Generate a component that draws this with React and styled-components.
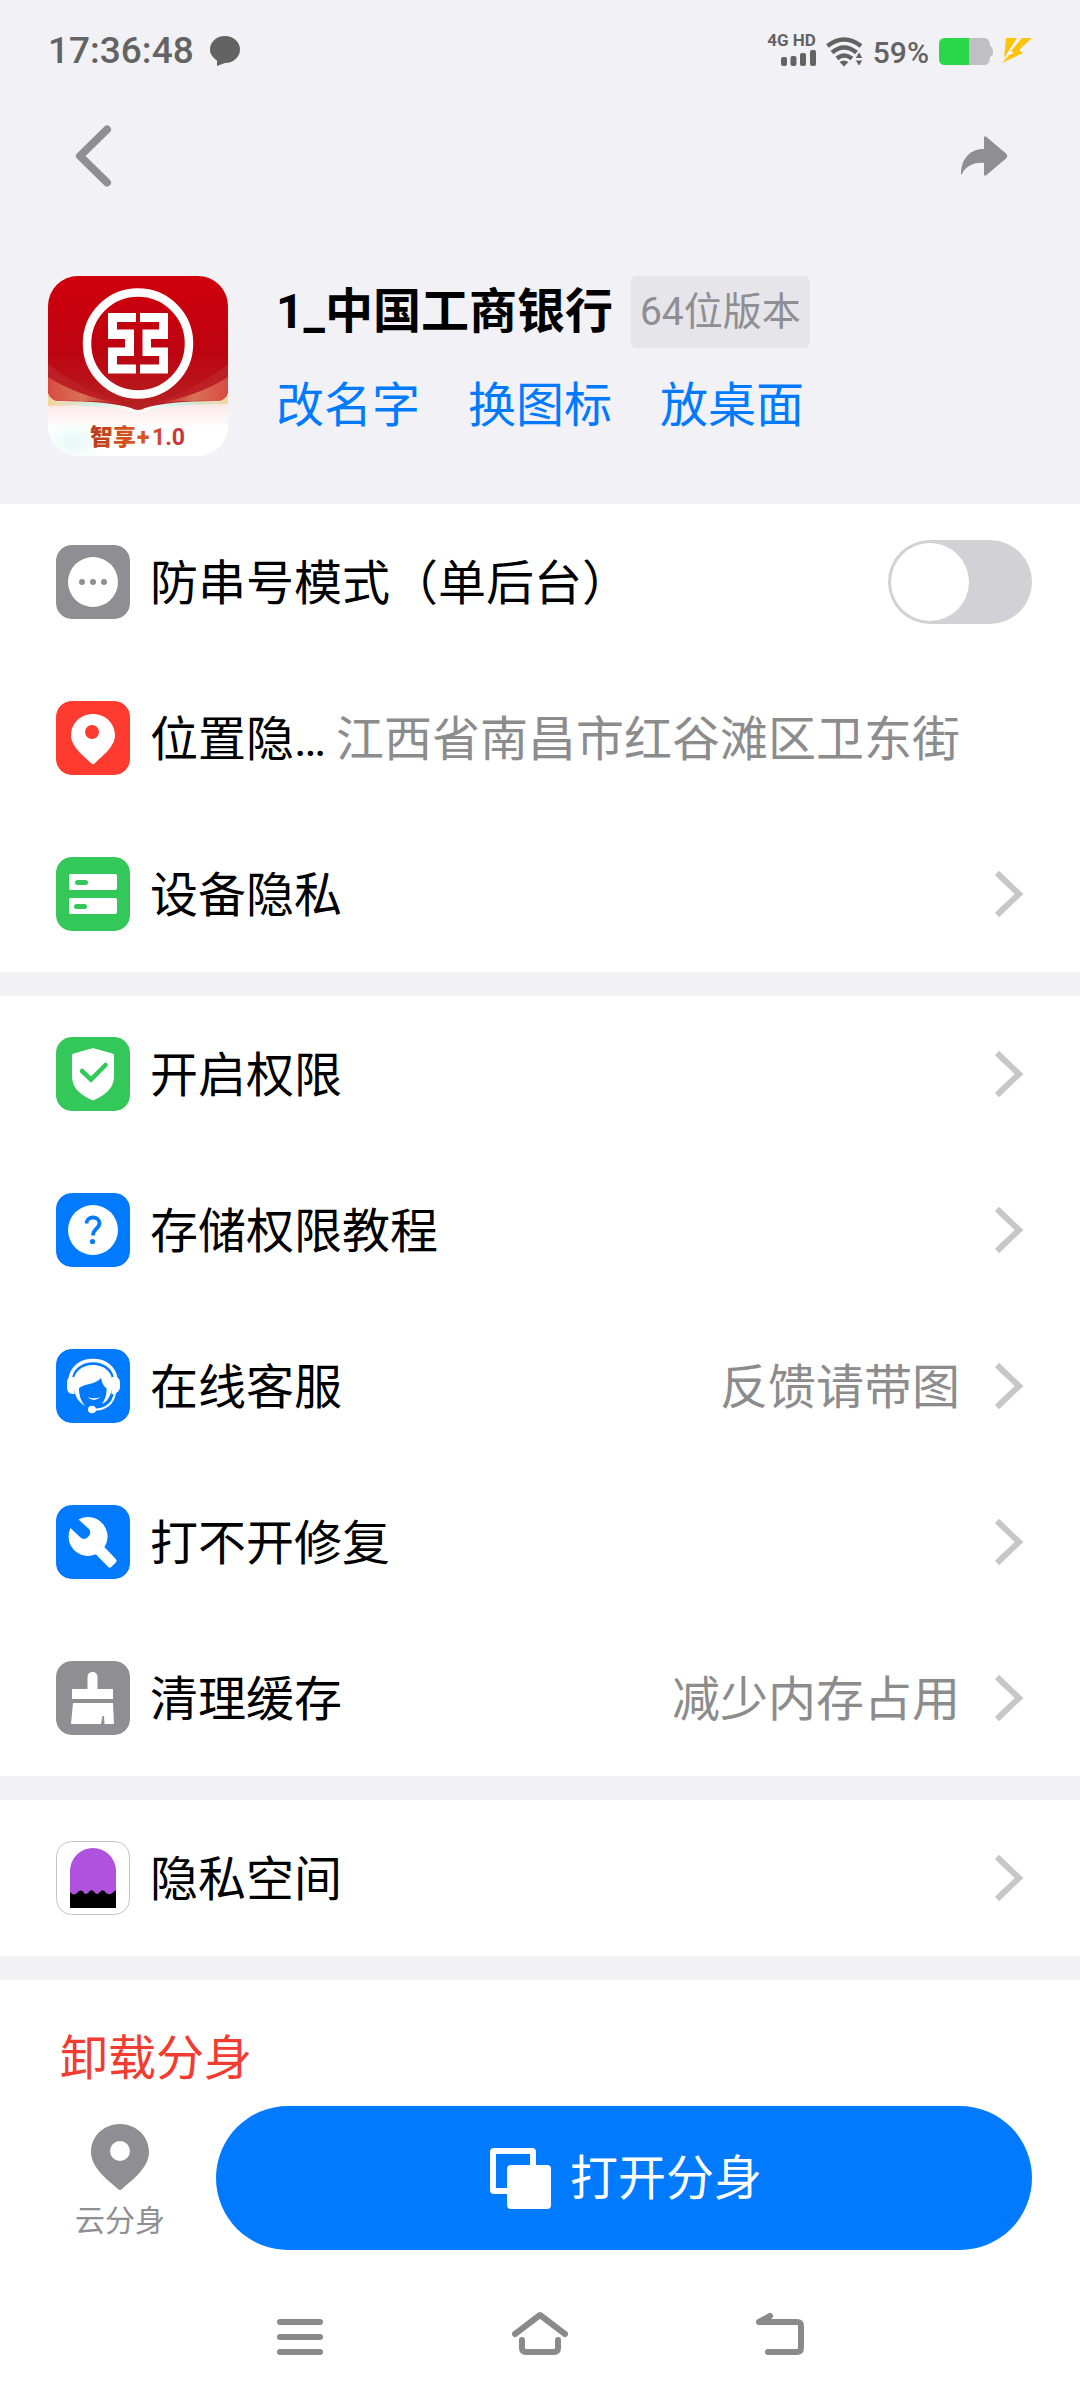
import React, { useState } from 'react'
import styled, { createGlobalStyle } from 'styled-components'

const GlobalStyle = createGlobalStyle`
    * {
        box-sizing: border-box;
    }
    body {
        margin: 0;
        background: #fff;
        font-family: Roboto, "Noto Sans CJK SC", sans-serif;
        color: #000;
    }
    button {
        margin: 0;
        padding: 0;
        border: 0;
        background: none;
        color: inherit;
        font: inherit;
        cursor: pointer;
    }
    svg {
        display: block;
        flex-shrink: 0;
    }
`

const Page = styled.div`
    display: flex;
    flex-direction: column;
    min-height: 100vh;
    background: #fff;
`

const Top = styled.header`
    background: #f2f1f6;
`

const StatusBar = styled.div`
    display: flex;
    align-items: center;
    justify-content: space-between;
    height: 102px;
    padding: 0 48px;
    color: #636363;
    font-weight: 500;
`

const StatusGroup = styled.div`
    display: flex;
    align-items: center;
    gap: ${props => props.$gap}px;
`

const Clock = styled.span`
    font-size: 37px;
    line-height: 42px;
`

const Network = styled.div`
    display: flex;
    flex-direction: column;
    align-items: flex-end;
    gap: 2px;
    padding-bottom: 4px;
    font-size: 17px;
    font-weight: 700;
    line-height: 16px;
`

const Percent = styled.span`
    padding-top: 3px;
    font-size: 30px;
    line-height: 36px;
`

const Toolbar = styled.div`
    display: flex;
    align-items: center;
    justify-content: space-between;
    height: 108px;
    padding: 0 72px;
    color: #8e8e93;
`

const Profile = styled.section`
    display: flex;
    gap: 48px;
    padding: 66px 48px 48px;
`

const ProfileInfo = styled.div`
    display: flex;
    flex-direction: column;
    gap: 28px;
`

const TitleRow = styled.div`
    display: flex;
    align-items: center;
    gap: 18px;
`

const AppName = styled.h1`
    margin: 0;
    font-size: 48px;
    font-weight: 700;
    line-height: 70px;
`

const Badge = styled.span`
    padding: 1px 9px 0;
    border-radius: 6px;
    background: #e5e5ea;
    color: #8e8e93;
    font-size: 39px;
    line-height: 71px;
`

const Links = styled.nav`
    display: flex;
    gap: 48px;
`

const TextLink = styled.a`
    color: #007aff;
    font-size: 48px;
    line-height: 60px;
    text-decoration: none;
`

const List = styled.main`
    display: flex;
    flex-direction: column;
    gap: 24px;
    background: #f2f1f6;
`

const Section = styled.section`
    display: flex;
    flex-direction: column;
    background: #fff;
`

const Row = styled.button`
    display: flex;
    align-items: center;
    width: 100%;
    height: 156px;
    padding: 0 48px 0 56px;
    font-size: 48px;
    line-height: 72px;
    text-align: left;
    cursor: pointer;
`

const RowLabel = styled.span`
    flex: 1;
    margin-left: 20px;
    padding-top: 4px;
    white-space: nowrap;
`

const RowValue = styled.span`
    margin-right: 24px;
    padding-top: 4px;
    color: #8c8c8c;
    white-space: nowrap;
`

const RowEnd = styled.span`
    display: flex;
    justify-content: center;
    width: 48px;
`

const Switch = styled.input`
    appearance: none;
    display: flex;
    width: 144px;
    height: 84px;
    margin: 0;
    padding: 3px;
    border-radius: 42px;
    background: ${props => props.checked ? '#34c759' : '#d1d1d6'};
    justify-content: ${props => props.checked ? 'flex-end' : 'flex-start'};
    cursor: pointer;
    &::before {
        content: "";
        width: 78px;
        height: 78px;
        border-radius: 50%;
        background: #fff;
    }
`

const Uninstall = styled.button`
    height: 126px;
    padding: 32px 60px 0;
    color: #f23c31;
    font-size: 48px;
    line-height: 72px;
    text-align: left;
`

const ActionBar = styled.footer`
    display: flex;
    gap: 24px;
    padding: 0 48px 18px;
`

const CloudButton = styled.button`
    display: flex;
    flex-direction: column;
    align-items: center;
    gap: 13px;
    width: 144px;
    padding-top: 18px;
    color: #8e8e93;
    font-size: 30px;
    line-height: 36px;
`

const OpenButton = styled.button`
    flex: 1;
    display: flex;
    align-items: center;
    justify-content: center;
    gap: 18px;
    height: 144px;
    padding-top: 2px;
    border-radius: 72px;
    background: #007aff;
    color: #fff;
    font-size: 48px;
    line-height: 72px;
`

const SystemNav = styled.nav`
    display: flex;
    align-items: center;
    justify-content: center;
    gap: 188px;
    height: 132px;
    margin-top: auto;
    color: #8a8a8a;
`

// Rounded tile behind every list icon
const Tile = ({ color, border, children }) => (
    <svg width="74" height="74" viewBox="0 0 74 74" aria-hidden="true">
        <rect x="0.5" y="0.5" width="73" height="73" rx="15" fill={color} stroke={border || color} />
        {children}
    </svg>
)

const DotsIcon = () => (
    <Tile color="#8e8e93">
        <circle cx="37" cy="37" r="25" fill="#fff" />
        <g fill="#8e8e93">
            <circle cx="26" cy="37" r="3" />
            <circle cx="37" cy="37" r="3" />
            <circle cx="48" cy="37" r="3" />
        </g>
    </Tile>
)

const LocationIcon = () => (
    <Tile color="#ff3b30">
        <path d="M37 13C49.5 13 59 22.5 59 34.5C59 46 45 56 38.5 62.5Q37 64 35.5 62.5C29 56 15 46 15 34.5C15 22.5 24.5 13 37 13Z" fill="#fff" />
        <circle cx="36" cy="31" r="7" fill="#ff3b30" />
    </Tile>
)

const DeviceIcon = () => (
    <Tile color="#34c759">
        <rect x="13" y="17" width="48" height="16" rx="2" fill="#fff" />
        <rect x="13" y="41" width="48" height="16" rx="2" fill="#fff" />
        <rect x="19" y="23" width="13" height="5" rx="2.5" fill="#34c759" />
        <rect x="18" y="47" width="13" height="5" rx="2.5" fill="#34c759" />
    </Tile>
)

const ShieldIcon = () => (
    <Tile color="#34c759">
        <path d="M35.5 11.5Q37 10.8 38.5 11.5L56.5 16.5Q58 17 58 18.5V39C58 52 49 58 37 63.5C25 58 16 52 16 39V18.5Q16 17 17.5 16.5Z" fill="#fff" />
        <path d="M26 34L35 42.5L49.5 28" fill="none" stroke="#34c759" strokeWidth="4.5" strokeLinecap="round" />
    </Tile>
)

const HelpIcon = () => (
    <Tile color="#007aff">
        <circle cx="37" cy="37" r="25" fill="#fff" />
        <path d="M30.5 30.5C30.5 22.5 43.5 22.5 43.5 30.5C43.5 35.5 37 35.5 37 42.5" fill="none" stroke="#007aff" strokeWidth="3.8" />
        <circle cx="36.5" cy="48.5" r="2.6" fill="#007aff" />
    </Tile>
)

const ServiceIcon = () => (
    <Tile color="#007aff">
        <path d="M14 31C15 18.5 25 11.5 37 11.5C49 11.5 59 18.5 60 31" fill="none" stroke="#fff" strokeWidth="3.5" />
        <path d="M18.5 28V45H16Q11 44 11 39V34Q11 29 14 28ZM55.5 28V45H58Q64 43 64 38V34Q64 29 60 28Z" fill="#fff" />
        <path d="M18 40C15 25 24 16 37 16C50 16 59 25 56 40C54 48 51 53 46 55C49 50 51 46 50.5 39C47 37 46 33 45 29C39 36 30 34 23 39C23 47 25 52 29 57C21 52 19 46 18 40Z" fill="#fff" />
        <path d="M31.5 48Q38 54 44.5 48Q38 50.5 31.5 48Z" fill="#fff" />
        <path d="M37 60.5C49 61 57 55 59 44" fill="none" stroke="#fff" strokeWidth="2.2" />
        <ellipse cx="36" cy="60.5" rx="4" ry="3.8" fill="#fff" />
    </Tile>
)

const RepairIcon = () => (
    <Tile color="#007aff">
        <path d="M22.5 14.5A19.5 19.5 0 1 1 14.5 23L24 32Q28 36 32 32Q36 28 33 24Z" fill="#fff" />
        <rect x="48" y="-5.5" width="35" height="11" rx="2.5" transform="rotate(46)" fill="#fff" />
    </Tile>
)

const CleanIcon = () => (
    <Tile color="#8e8e93">
        <path d="M16 28H31.5V15.5Q32 11 36.5 11Q41 11 41.5 15.5V28H57V38H16Z" fill="#fff" />
        <path d="M17 42H57L58 63H48.5L48 55H46.5L45 63H15Z" fill="#fff" />
    </Tile>
)

const SpaceIcon = () => (
    <Tile color="#fff" border="#c4c4c6">
        <path d="M14 67V30A23 23 0 0 1 60 30V67Z" fill="#af52de" />
        <path d="M14 67V51Q17 55 20.5 52.5Q25 47 28 52Q30.5 54 32.5 51.5Q36 47 39 52Q41.5 54 43.5 51.5Q47 47 50 52Q53 54 55.5 52.5L60 49V67Z" fill="#000" />
    </Tile>
)

const Chevron = () => (
    <svg width="34" height="48" viewBox="0 0 34 48" aria-hidden="true">
        <path d="M6 3L28 24L6 45" fill="none" stroke="#c7c7c8" strokeWidth="6" />
    </svg>
)

const AppLogo = () => (
    <svg width="180" height="180" viewBox="0 0 180 180" role="img" aria-label="中国工商银行">
        <defs>
            <clipPath id="logoClip"><rect width="180" height="180" rx="30" /></clipPath>
            <linearGradient id="logoRed" x1="0" y1="0" x2="0" y2="1">
                <stop offset="0" stopColor="#d0000c" />
                <stop offset="0.55" stopColor="#bd0310" />
                <stop offset="1" stopColor="#b52222" />
            </linearGradient>
            <linearGradient id="logoPaper" x1="0" y1="0" x2="0" y2="1">
                <stop offset="0" stopColor="#fbe3e3" />
                <stop offset="0.5" stopColor="#fff" />
            </linearGradient>
            <linearGradient id="logoText" gradientUnits="userSpaceOnUse" x1="42" y1="0" x2="135" y2="0">
                <stop offset="0" stopColor="#b83a1e" />
                <stop offset="0.5" stopColor="#dc5a22" />
                <stop offset="1" stopColor="#c8313a" />
            </linearGradient>
            <linearGradient id="logoEdge" x1="0" y1="0" x2="1" y2="0">
                <stop offset="0" stopColor="#f4d59b" />
                <stop offset="0.25" stopColor="#cdeee0" />
                <stop offset="0.5" stopColor="#fff" />
                <stop offset="0.75" stopColor="#c5efe4" />
                <stop offset="1" stopColor="#f4d59b" />
            </linearGradient>
            <linearGradient id="glowLeft" x1="0" y1="0" x2="1" y2="0">
                <stop offset="0" stopColor="#d94a42" />
                <stop offset="0.5" stopColor="#d87355" />
                <stop offset="1" stopColor="#b52222" />
            </linearGradient>
            <linearGradient id="glowRight" x1="1" y1="0" x2="0" y2="0">
                <stop offset="0" stopColor="#d94a42" />
                <stop offset="0.5" stopColor="#d87355" />
                <stop offset="1" stopColor="#b52222" />
            </linearGradient>
            <radialGradient id="logoMint">
                <stop offset="0" stopColor="#e6faf5" />
                <stop offset="1" stopColor="#e6faf5" stopOpacity="0" />
            </radialGradient>
        </defs>
        <g clipPath="url(#logoClip)">
            <rect width="180" height="180" fill="#fff" />
            <rect y="124" width="180" height="56" fill="url(#logoPaper)" />
            <ellipse cx="26" cy="166" rx="34" ry="22" fill="url(#logoMint)" />
            <path d="M0 116Q2 125 12 126Q60 124 84 133Q90 137 96 133Q120 124 168 126Q178 125 180 116V128Q120 128 98 135Q90 139 82 135Q60 128 0 130Z" fill="url(#logoEdge)" />
            <path d="M0 0H180V116Q178 125 168 125Q120 125 97 132Q90 136 83 132Q60 125 12 125Q2 125 0 116Z" fill="url(#logoRed)" />
            <path d="M0 88Q32 114 78 128Q50 124 12 124Q2 124 0 116Z" fill="#bd1f26" />
            <path d="M0 101Q30 120 70 127Q40 124 12 125Q2 125 0 116Z" fill="url(#glowLeft)" />
            <path d="M180 88Q148 114 102 128Q130 124 168 124Q178 124 180 116Z" fill="#bd1f26" />
            <path d="M180 101Q150 120 110 127Q140 124 168 125Q178 125 180 116Z" fill="url(#glowRight)" />
            <circle cx="90" cy="67.5" r="51" fill="none" stroke="#fff" strokeWidth="8.5" />
            <path d="M60 37H88V46H69V53.5H86V80H69V88.5H88V97.5H60V71.5H77V63H60Z" fill="#fff" />
            <path d="M120 37H92V46H111V53.5H94.5V80H111V88.5H92V97.5H120V71.5H103V63H120Z" fill="#fff" />
            <text y="169" fontSize="23" fontWeight="900" fill="url(#logoText)">
                <tspan x="42">智享</tspan>
                <tspan x="89">+</tspan>
                <tspan x="104" fontWeight="700">1.0</tspan>
            </text>
        </g>
    </svg>
)

const sections = [
    [
        { label: '位置隐…', Icon: LocationIcon, value: '江西省南昌市红谷滩区卫东街', noArrow: true },
        { label: '设备隐私', Icon: DeviceIcon },
    ],
    [
        { label: '开启权限', Icon: ShieldIcon },
        { label: '存储权限教程', Icon: HelpIcon },
        { label: '在线客服', Icon: ServiceIcon, value: '反馈请带图' },
        { label: '打不开修复', Icon: RepairIcon },
        { label: '清理缓存', Icon: CleanIcon, value: '减少内存占用' },
    ],
    [
        { label: '隐私空间', Icon: SpaceIcon },
    ],
]

const ListRow = ({ item }) => (
    <Row type="button">
        <item.Icon />
        <RowLabel>{item.label}</RowLabel>
        {item.value && <RowValue>{item.value}</RowValue>}
        <RowEnd>{!item.noArrow && <Chevron />}</RowEnd>
    </Row>
)

const App = () => {
    const [single, setSingle] = useState(false)

    return (
        <Page>
            <GlobalStyle />
            <Top>
                <StatusBar>
                    <StatusGroup $gap={16}>
                        <Clock>17:36:48</Clock>
                        <svg width="30" height="30" viewBox="0 0 30 30" aria-hidden="true">
                            <path d="M15 0C23.5 0 30 6 30 13.5C30 21 23.5 27 15 27L7 30V24.5C3 22 0 18 0 13.5C0 6 6.5 0 15 0Z" fill="currentColor" />
                        </svg>
                    </StatusGroup>
                    <StatusGroup $gap={10}>
                        <Network>
                            <span>4G HD</span>
                            <svg width="35" height="16" viewBox="0 0 35 16" fill="currentColor" aria-hidden="true">
                                <rect x="0" y="7" width="6" height="9" rx="2" />
                                <rect x="9.5" y="6" width="6" height="10" rx="2" />
                                <rect x="19" y="3" width="6" height="13" rx="2" />
                                <rect x="29" y="0" width="6" height="16" rx="2" />
                            </svg>
                        </Network>
                        <svg width="37" height="32" viewBox="0 -2 37 32" fill="none" stroke="currentColor" strokeWidth="4.5" aria-hidden="true">
                            <path d="M1.5 9Q18 -4 35 9" />
                            <path d="M6 15.5Q18 5.5 30.5 15.5" />
                            <path d="M11 21.5Q18 15.5 26 21.5" />
                            <path d="M13.5 25Q18 22 22.5 25L18 29.5Z" fill="currentColor" stroke="none" />
                            <path d="M29 21.5L33 14.5L37 21.5ZM29 23H37L33 29.5Z" fill="currentColor" stroke="#f2f1f6" strokeWidth="1" />
                        </svg>
                        <Percent>59%</Percent>
                        <svg width="93" height="30" viewBox="0 -2 93 30" aria-hidden="true">
                            <path d="M30 0H45Q51 0 51 8Q54 9 54 13.5Q54 18 51 19Q51 27 45 27H30Z" fill="#bfbfc4" />
                            <path d="M30 0H6Q0 0 0 6V21Q0 27 6 27H30Z" fill="#2ad748" />
                            <path d="M67 0H78L69 14L65 20ZM83 0H93L80 12L84 15L63 25L70 17L75 15L72 13Z" fill="#fdc40c" />
                        </svg>
                    </StatusGroup>
                </StatusBar>
                <Toolbar>
                    <button type="button" aria-label="返回">
                        <svg width="42" height="62" viewBox="0 0 42 62" aria-hidden="true">
                            <path d="M35 4.5L8 31L35 57.5" fill="none" stroke="currentColor" strokeWidth="8" strokeLinecap="round" strokeLinejoin="round" />
                        </svg>
                    </button>
                    <button type="button" aria-label="分享">
                        <svg width="48" height="40" viewBox="0 0 48 40" aria-hidden="true">
                            <path d="M24 2Q24 -1 26.5 1L46 17.5Q48.5 20 46 22.5L26.5 39Q24 41 24 38V27C14 26 6 30 2 38Q1 40 1 37C2 20 12 13 24 13Z" fill="currentColor" />
                        </svg>
                    </button>
                </Toolbar>
                <Profile>
                    <AppLogo />
                    <ProfileInfo>
                        <TitleRow>
                            <AppName>1_中国工商银行</AppName>
                            <Badge>64位版本</Badge>
                        </TitleRow>
                        <Links>
                            <TextLink href="#rename">改名字</TextLink>
                            <TextLink href="#icon">换图标</TextLink>
                            <TextLink href="#desktop">放桌面</TextLink>
                        </Links>
                    </ProfileInfo>
                </Profile>
            </Top>

            <List>
                {sections.map((items, index) => (
                    <Section key={index}>
                        {index === 0 && (
                            <Row as="label" htmlFor="single">
                                <DotsIcon />
                                <RowLabel>防串号模式（单后台）</RowLabel>
                                <Switch
                                    id="single"
                                    type="checkbox"
                                    role="switch"
                                    checked={single}
                                    onChange={e => setSingle(e.target.checked)}
                                />
                            </Row>
                        )}
                        {items.map(item => <ListRow key={item.label} item={item} />)}
                    </Section>
                ))}
                <Section>
                    <Uninstall type="button">卸载分身</Uninstall>
                </Section>
            </List>

            <ActionBar>
                <CloudButton type="button">
                    <svg width="58" height="66" viewBox="0 0 58 66" aria-hidden="true">
                        <path fillRule="evenodd" d="M29 0C45 0 58 12 58 28C58 44 41 56 31 65Q29 67 27 65C17 56 0 44 0 28C0 12 13 0 29 0ZM29 17A10 10 0 1 0 29 37A10 10 0 1 0 29 17Z" fill="currentColor" />
                    </svg>
                    云分身
                </CloudButton>
                <OpenButton type="button">
                    <svg width="66" height="62" viewBox="-4 0 66 62" aria-hidden="true">
                        <rect x="3" y="3" width="40" height="40" rx="1" fill="none" stroke="#fff" strokeWidth="6" />
                        <rect x="17" y="17" width="44" height="44" rx="4" fill="#fff" />
                    </svg>
                    打开分身
                </OpenButton>
            </ActionBar>

            <SystemNav>
                <button type="button" aria-label="最近任务">
                    <svg width="48" height="48" viewBox="0 0 48 48" aria-hidden="true">
                        <path d="M4 12H44M4 27H44M4 42H44" stroke="currentColor" strokeWidth="6" strokeLinecap="round" />
                    </svg>
                </button>
                <button type="button" aria-label="主屏幕">
                    <svg width="56" height="48" viewBox="0 0 56 48" fill="none" stroke="currentColor" strokeWidth="6" strokeLinecap="round" strokeLinejoin="round" aria-hidden="true">
                        <path d="M3 24L28 5L53 24" />
                        <path d="M10 30V38Q10 42 14 42H42Q46 42 46 38V30" />
                    </svg>
                </button>
                <button type="button" aria-label="后退">
                    <svg width="48" height="48" viewBox="0 0 48 48" fill="none" stroke="currentColor" strokeWidth="6" strokeLinecap="round" strokeLinejoin="round" aria-hidden="true">
                        <path d="M14 6L3 12H41Q45 12 45 16V38Q45 42 41 42H12" />
                    </svg>
                </button>
            </SystemNav>
        </Page>
    )
}

export default App
